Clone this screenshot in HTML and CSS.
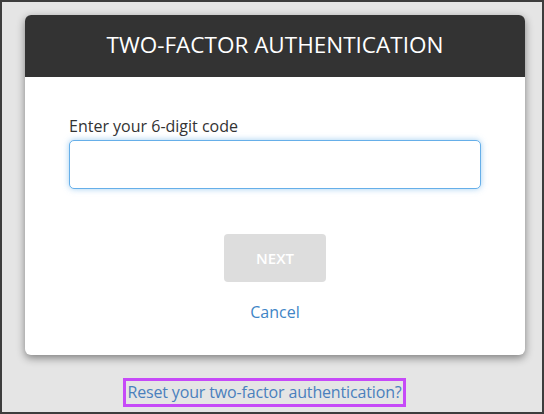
FILE: index.html
```html
<!DOCTYPE html>
<html>
<head>
<meta charset="utf-8">
<link rel="stylesheet" href="styles.css">
</head>
<body>
<div class="page">
  <div class="card">
    <div class="card-header">TWO-FACTOR AUTHENTICATION</div>
    <div class="card-body">
      <label class="label" for="code">Enter your 6-digit code</label>
      <input class="input" id="code" type="text">
      <div class="actions">
        <button class="btn-next" type="button">NEXT</button>
        <a class="cancel" href="#">Cancel</a>
      </div>
    </div>
  </div>
  <div class="reset-wrap">
    <a class="reset" href="#">Reset your two-factor authentication?</a>
  </div>
</div>
</body>
</html>
```
FILE: styles.css
```css
* { box-sizing: border-box; }
html, body { margin: 0; padding: 0; }
body {
  width: 544px;
  height: 414px;
  overflow: hidden;
  font-family: "Open Sans", "DejaVu Sans", sans-serif;
}
.page {
  width: 544px;
  height: 414px;
  border: 2px solid #3d3d3d;
  background: #e5e5e5;
  padding: 13px 0 0 23px;
  display: flex;
  flex-direction: column;
  align-items: flex-start;
}
.card {
  width: 500px;
  height: 340px;
  background: #fff;
  border-radius: 6px;
  box-shadow: 0 3px 8px rgba(0,0,0,0.45);
  overflow: hidden;
  display: flex;
  flex-direction: column;
}
.card-header {
  height: 62px;
  background: #333333;
  color: #fff;
  font-size: 22.5px;
  line-height: 60px;
  text-align: center;
}
.card-body {
  padding: 39px 44px 0;
  display: flex;
  flex-direction: column;
}
.label {
  font-size: 16px;
  color: #333;
  line-height: 21px;
  margin-bottom: 3px;
}
.input {
  width: 412px;
  height: 49px;
  border: 1px solid #66afe9;
  border-radius: 5px;
  box-shadow: 0 0 6px rgba(102,175,233,0.6);
  outline: none;
  font-family: inherit;
  font-size: 16px;
  padding: 0 12px;
}
.actions {
  margin-top: 45px;
  display: flex;
  flex-direction: column;
  align-items: center;
}
.btn-next {
  width: 102px;
  height: 48px;
  border: none;
  border-radius: 4px;
  background: #dddddd;
  color: #fff;
  font-family: inherit;
  font-size: 15px;
  font-weight: 600;
  padding: 0;
}
.cancel {
  margin-top: 19px;
  font-size: 16px;
  line-height: 22px;
  color: #3f85c6;
  text-decoration: none;
}
.reset-wrap {
  margin-top: 23px;
  width: 500px;
  display: flex;
  justify-content: center;
  padding-right: 21px;
}
.reset {
  display: block;
  border: 3px solid #c64af8;
  padding: 0 1px;
  font-size: 16px;
  letter-spacing: -0.15px;
  line-height: 23px;
  color: #4a80bd;
  text-decoration: none;
}
```
